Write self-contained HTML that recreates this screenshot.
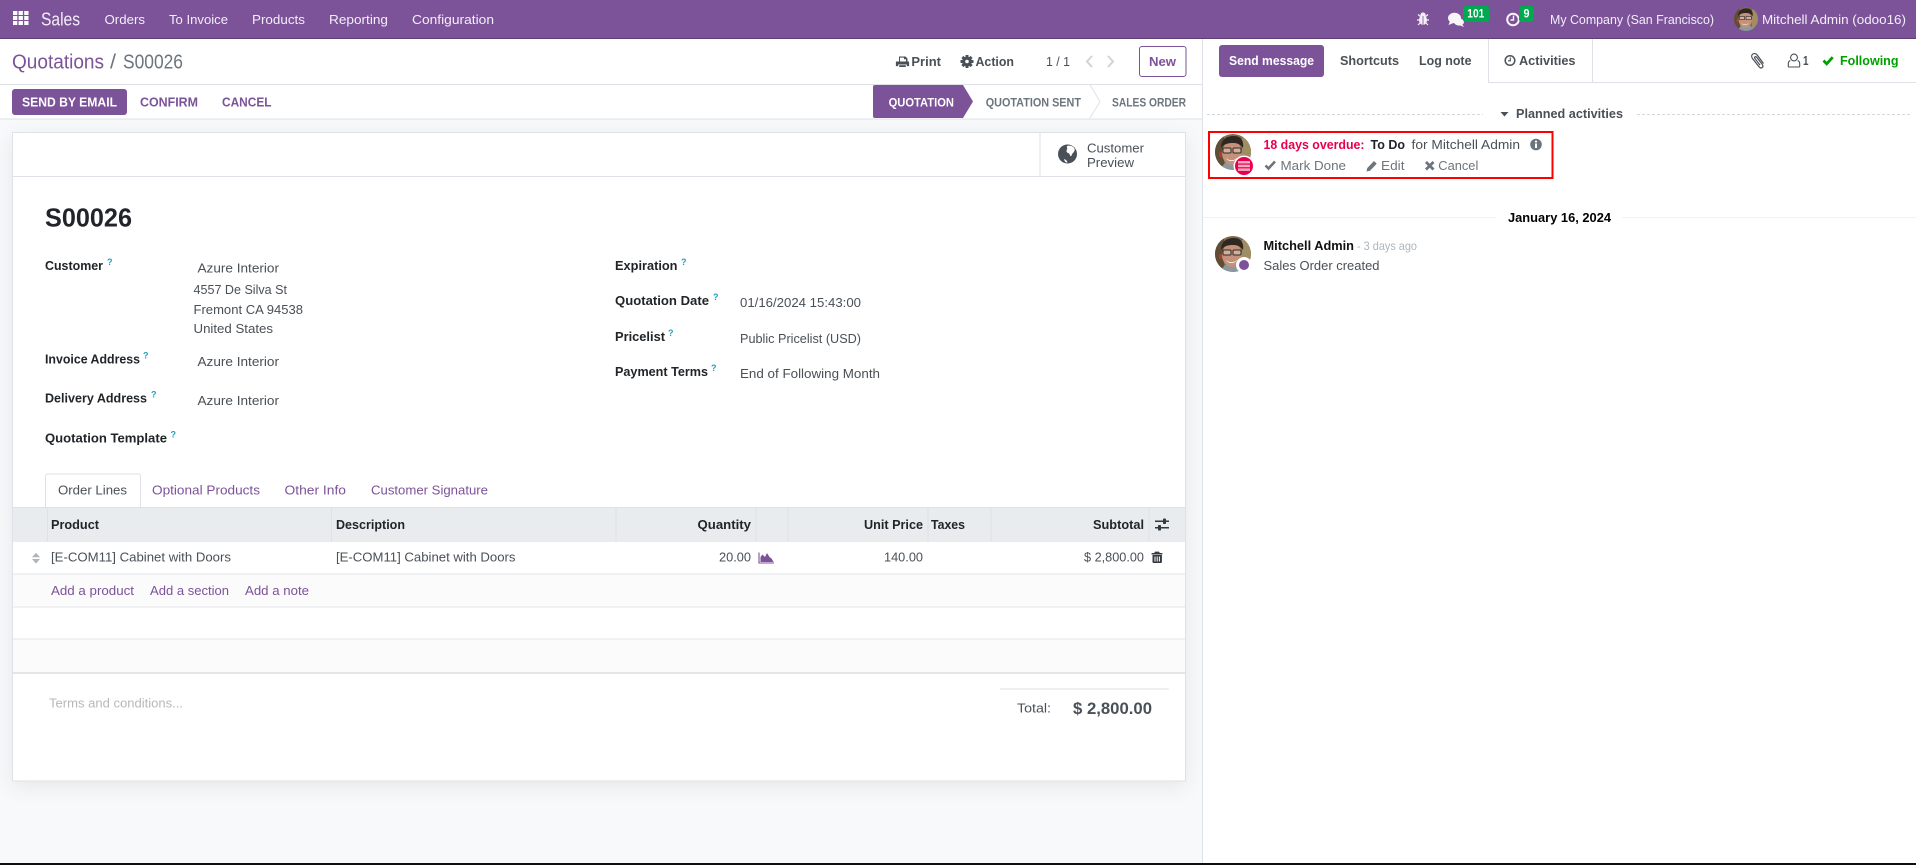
<!DOCTYPE html>
<html lang="en">
<head>
<meta charset="utf-8">
<title>S00026 - Quotations</title>
<style>
html,body{margin:0;padding:0;width:1916px;height:865px;overflow:hidden;background:#f8f9fa}
svg{display:block;position:absolute;left:0;top:0}
text{font-family:"Liberation Sans",Arial,sans-serif;font-size:13px;fill:#495057;white-space:pre}
.b{font-weight:700}
.k{fill:#212529}
.w{fill:#f3eef7}
.p{fill:#7c5299}
.g{fill:#6c757d}
.q{font-size:9px;font-weight:700;fill:#1f9fc0}
</style>
</head>
<body>
<svg width="1916" height="865" viewBox="0 0 1916 865" xmlns="http://www.w3.org/2000/svg">
<defs>
<clipPath id="cp"><circle cx="18" cy="18" r="18"/></clipPath>
<symbol id="av" viewBox="0 0 36 36">
<g clip-path="url(#cp)">
<rect width="36" height="36" fill="#7d6c4c"/>
<rect x="0" y="0" width="9" height="36" fill="#5f4e36"/>
<rect x="27" y="4" width="9" height="32" fill="#a08d64"/>
<path d="M6 36c1-6 6-9 12-9s11 3 12 9z" fill="#8b98a0"/>
<ellipse cx="17" cy="19" rx="10" ry="12" fill="#c4917a"/>
<path d="M6 14C6 5 12 2 19 2c7 0 10 5 9 12-3-4-6-5-10-5-5 0-9 1-12 5z" fill="#2f2721"/>
<rect x="8" y="14" width="8" height="5" rx="1" fill="#d8ad96" stroke="#2a2a2a" stroke-width="1"/>
<rect x="18" y="14" width="8" height="5" rx="1" fill="#d8ad96" stroke="#2a2a2a" stroke-width="1"/>
<path d="M11 24c3 3 8 3 11 0-2 4-9 4-11 0z" fill="#fff"/>
<rect x="4" y="18" width="3" height="5" fill="#b03b30"/>
</g>
</symbol>
</defs>

<!-- page backgrounds -->
<rect width="1916" height="865" fill="#f8f9fa"/>
<rect x="1202" y="39" width="714" height="826" fill="#fff"/>
<rect x="1202" y="39" width="1" height="826" fill="#dee2e6"/>

<!-- top navbar -->
<rect width="1916" height="38" fill="#7c5299"/>
<rect y="38" width="1916" height="1" fill="#5e3f75"/>
<g fill="#fff">
<rect x="13" y="11" width="4.3" height="4"/><rect x="18.6" y="11" width="4.3" height="4"/><rect x="24.2" y="11" width="4.3" height="4"/>
<rect x="13" y="16" width="4.3" height="4"/><rect x="18.6" y="16" width="4.3" height="4"/><rect x="24.2" y="16" width="4.3" height="4"/>
<rect x="13" y="21" width="4.3" height="4"/><rect x="18.6" y="21" width="4.3" height="4"/><rect x="24.2" y="21" width="4.3" height="4"/>
</g>
<text class="w" x="41" y="25.5" style="font-size:18px" textLength="39" lengthAdjust="spacingAndGlyphs">Sales</text>
<text class="w" x="104.5" y="24" textLength="40.5" lengthAdjust="spacingAndGlyphs">Orders</text>
<text class="w" x="169" y="24" textLength="59" lengthAdjust="spacingAndGlyphs">To Invoice</text>
<text class="w" x="252" y="24" textLength="53" lengthAdjust="spacingAndGlyphs">Products</text>
<text class="w" x="329" y="24" textLength="59" lengthAdjust="spacingAndGlyphs">Reporting</text>
<text class="w" x="412" y="24" textLength="82" lengthAdjust="spacingAndGlyphs">Configuration</text>

<!-- bug -->
<g fill="#f3eef7">
<ellipse cx="1423" cy="20" rx="4" ry="5"/><circle cx="1423" cy="15" r="2.6"/>
<path d="M1418 14.5l2.5 2M1428 14.5l-2.5 2M1417 20h3M1429 20h-3M1418 25l2.5-2.5M1428 25l-2.5-2.5" stroke="#f3eef7" stroke-width="1.2" fill="none"/>
</g>
<rect x="1422.6" y="16" width=".8" height="9" fill="#7c5299"/>
<!-- comments -->
<g fill="#f8f5fa">
<ellipse cx="1454.5" cy="18" rx="6.5" ry="5.2"/><path d="M1450 21l-1.5 4 5-2z"/>
<ellipse cx="1459" cy="22" rx="5" ry="3.6"/><path d="M1462 24l2 3-5-2z"/>
</g>
<rect x="1463" y="6" width="26.5" height="16" rx="2.5" fill="#00a84f"/>
<text x="1467.3" y="17.5" style="fill:#fff;font-size:12px;font-weight:700" textLength="17" lengthAdjust="spacingAndGlyphs">101</text>
<!-- clock -->
<circle cx="1513" cy="19.5" r="5.8" fill="none" stroke="#f8f5fa" stroke-width="2"/>
<path d="M1513.5 15.5v4.5h-3" fill="none" stroke="#f8f5fa" stroke-width="1.4"/>
<rect x="1519" y="6" width="15" height="16" rx="2.5" fill="#00a84f"/>
<text x="1523.5" y="17.5" style="fill:#fff;font-size:12px;font-weight:700" textLength="6" lengthAdjust="spacingAndGlyphs">9</text>
<text class="w" x="1550" y="24" textLength="164" lengthAdjust="spacingAndGlyphs">My Company (San Francisco)</text>
<use href="#av" x="1734" y="7" width="24" height="24"/>
<text class="w" x="1762" y="24" textLength="144" lengthAdjust="spacingAndGlyphs">Mitchell Admin (odoo16)</text>

<!-- control panel -->
<rect y="39" width="1202" height="80" fill="#fff"/>
<rect y="84" width="1202" height="1" fill="#dee2e6"/>
<rect y="118.5" width="1202" height="1" fill="#dee2e6"/>
<text class="p" x="12" y="68.5" style="font-size:20px" textLength="92" lengthAdjust="spacingAndGlyphs">Quotations</text>
<text class="g" x="110" y="68.5" style="font-size:20px" textLength="6" lengthAdjust="spacingAndGlyphs">/</text>
<text class="g" x="123" y="68.5" style="font-size:20px" textLength="60" lengthAdjust="spacingAndGlyphs">S00026</text>

<!-- print icon -->
<g fill="#495057">
<path d="M899 56.5h6.5l2 2v3.5h-1.500v-2.800h-2v-1.600h-4v4.400H899z"/>
<path d="M896.500 61.500h12a.6.6 0 0 1 .6.6v4h-2.300v-1.600h-8.600v1.600h-2.300v-4a.6.6 0 0 1 .6-.6z"/>
<rect x="899.200" y="65.200" width="6.600" height="1.800"/>
</g>
<text x="911.400" y="66" class="b" textLength="29.600" lengthAdjust="spacingAndGlyphs">Print</text>
<!-- gear icon -->
<g transform="translate(967,61.5)">
<circle r="4.900" fill="#495057"/>
<g fill="#495057"><rect x="-1.500" y="-6.500" width="3" height="13"/><rect x="-6.500" y="-1.500" width="13" height="3"/>
<rect x="-1.500" y="-6.500" width="3" height="13" transform="rotate(45)"/><rect x="-1.500" y="-6.500" width="3" height="13" transform="rotate(-45)"/></g>
<circle r="1.800" fill="#fff"/>
</g>
<text x="975.500" y="66" class="b" textLength="38.500" lengthAdjust="spacingAndGlyphs">Action</text>
<text x="1046" y="66" textLength="24" lengthAdjust="spacingAndGlyphs">1 / 1</text>
<path d="M1092 56l-5 5.500 5 5.500M1108 56l5 5.500-5 5.500" fill="none" stroke="#ced4da" stroke-width="2"/>
<rect x="1139.500" y="46.500" width="46.500" height="30" rx="2.500" fill="#fff" stroke="#7c5299"/>
<text class="p b" x="1149" y="66" textLength="27" lengthAdjust="spacingAndGlyphs">New</text>

<!-- action row -->
<rect x="12" y="89" width="115" height="26" rx="3" fill="#7c5299"/>
<text class="b" x="22" y="106.500" style="fill:#fff" textLength="95" lengthAdjust="spacingAndGlyphs">SEND BY EMAIL</text>
<text class="p b" x="140" y="106.500" textLength="58" lengthAdjust="spacingAndGlyphs">CONFIRM</text>
<text class="p b" x="222" y="106.500" textLength="49.500" lengthAdjust="spacingAndGlyphs">CANCEL</text>

<!-- status bar -->
<path d="M875 85h88l10 16.500-10 16.500h-88a2 2 0 0 1-2-2V87a2 2 0 0 1 2-2z" fill="#7c5299"/>
<text class="b" x="888.600" y="106.500" style="fill:#fff;font-size:12px" textLength="65.400" lengthAdjust="spacingAndGlyphs">QUOTATION</text>
<text class="b g" x="985.700" y="106.500" style="font-size:12px" textLength="95.300" lengthAdjust="spacingAndGlyphs">QUOTATION SENT</text>
<path d="M1090 85l10 16.500-10 16.500" fill="none" stroke="#dee2e6"/>
<text class="b g" x="1112" y="106.500" style="font-size:12px" textLength="74" lengthAdjust="spacingAndGlyphs">SALES ORDER</text>

<!-- form sheet -->
<rect x="12.500" y="132.500" width="1173" height="648.500" fill="#fff" stroke="#dee2e6" style="filter:drop-shadow(0 5px 10px rgba(0,0,0,.07))"/>
<rect x="13" y="176" width="1172" height="1" fill="#dee2e6"/>
<rect x="1039.500" y="133" width="1" height="43" fill="#dee2e6"/>
<!-- globe -->
<circle cx="1067.500" cy="154" r="9.500" fill="#495057"/>
<path d="M1067 146c3-1 6 0 7.500 2.500 .8 2-1 4-2 5-1 1-.5 2.500-2 2.800-.8-1.800-1-3-3-3.500-1.500-1-1-2.800-.3-3.800.5-1.200-.8-1.800-.2-3zM1064 159c1.500.5 3 1.500 3.500 3.300l-1.500.2c-1-1-1.800-2-2-3.500z" fill="#fff"/>
<text x="1087" y="152.500" textLength="57" lengthAdjust="spacingAndGlyphs">Customer</text>
<text x="1087" y="167" textLength="47" lengthAdjust="spacingAndGlyphs">Preview</text>

<text class="k b" x="45" y="226.500" style="font-size:26px" textLength="87" lengthAdjust="spacingAndGlyphs">S00026</text>

<text class="k b" x="45" y="270" textLength="58" lengthAdjust="spacingAndGlyphs">Customer</text><text class="q" x="107" y="265">?</text>
<text x="197.500" y="272.500" textLength="81.500" lengthAdjust="spacingAndGlyphs">Azure Interior</text>
<text x="193.500" y="294" textLength="93.500" lengthAdjust="spacingAndGlyphs">4557 De Silva St</text>
<text x="193.500" y="314" textLength="109.500" lengthAdjust="spacingAndGlyphs">Fremont CA 94538</text>
<text x="193.500" y="333" textLength="79.500" lengthAdjust="spacingAndGlyphs">United States</text>

<text class="k b" x="45" y="363.500" textLength="95" lengthAdjust="spacingAndGlyphs">Invoice Address</text><text class="q" x="143" y="358.500">?</text>
<text x="197.500" y="366" textLength="81.500" lengthAdjust="spacingAndGlyphs">Azure Interior</text>
<text class="k b" x="45" y="402.500" textLength="102" lengthAdjust="spacingAndGlyphs">Delivery Address</text><text class="q" x="151" y="397.500">?</text>
<text x="197.500" y="405" textLength="81.500" lengthAdjust="spacingAndGlyphs">Azure Interior</text>
<text class="k b" x="45" y="442.500" textLength="122" lengthAdjust="spacingAndGlyphs">Quotation Template</text><text class="q" x="170.500" y="437.500">?</text>

<text class="k b" x="615" y="270" textLength="62.500" lengthAdjust="spacingAndGlyphs">Expiration</text><text class="q" x="681" y="265">?</text>
<text class="k b" x="615" y="305" textLength="94" lengthAdjust="spacingAndGlyphs">Quotation Date</text><text class="q" x="713" y="300">?</text>
<text x="740" y="307" textLength="121" lengthAdjust="spacingAndGlyphs">01/16/2024 15:43:00</text>
<text class="k b" x="615" y="341" textLength="50" lengthAdjust="spacingAndGlyphs">Pricelist</text><text class="q" x="668" y="336">?</text>
<text x="740" y="343" textLength="121" lengthAdjust="spacingAndGlyphs">Public Pricelist (USD)</text>
<text class="k b" x="615" y="376" textLength="93" lengthAdjust="spacingAndGlyphs">Payment Terms</text><text class="q" x="711" y="371">?</text>
<text x="740" y="378" textLength="140" lengthAdjust="spacingAndGlyphs">End of Following Month</text>

<!-- tabs -->
<path d="M45.500 507.500V476a2 2 0 0 1 2-2h91a2 2 0 0 1 2 2v31.500" fill="#fff" stroke="#dee2e6"/>
<text x="58" y="494.500" textLength="69" lengthAdjust="spacingAndGlyphs">Order Lines</text>
<text class="p" x="152" y="494.500" textLength="108" lengthAdjust="spacingAndGlyphs">Optional Products</text>
<text class="p" x="284.500" y="494.500" textLength="61.500" lengthAdjust="spacingAndGlyphs">Other Info</text>
<text class="p" x="371" y="494.500" textLength="117" lengthAdjust="spacingAndGlyphs">Customer Signature</text>

<!-- table -->
<rect x="13" y="507" width="1172" height="35" fill="#e9ecef"/>
<rect x="13" y="507" width="1172" height="1" fill="#dee2e6"/>
<g fill="#dee2e6">
<rect x="47" y="508" width="1" height="34"/><rect x="331" y="508" width="1" height="34"/><rect x="615.500" y="508" width="1" height="34"/>
<rect x="755.500" y="508" width="1" height="34"/><rect x="787.500" y="508" width="1" height="34"/><rect x="927.500" y="508" width="1" height="34"/>
<rect x="990.500" y="508" width="1" height="34"/><rect x="1148.500" y="508" width="1" height="34"/>
</g>
<text class="k b" x="51" y="529" textLength="48" lengthAdjust="spacingAndGlyphs">Product</text>
<text class="k b" x="336" y="529" textLength="69" lengthAdjust="spacingAndGlyphs">Description</text>
<text class="k b" x="697.500" y="529" textLength="53.500" lengthAdjust="spacingAndGlyphs">Quantity</text>
<text class="k b" x="864" y="529" textLength="59" lengthAdjust="spacingAndGlyphs">Unit Price</text>
<text class="k b" x="931" y="529" textLength="34" lengthAdjust="spacingAndGlyphs">Taxes</text>
<text class="k b" x="1093" y="529" textLength="51" lengthAdjust="spacingAndGlyphs">Subtotal</text>
<!-- sliders -->
<g fill="#343a40">
<rect x="1155" y="520.500" width="14" height="1.500"/><rect x="1155" y="527" width="14" height="1.500"/>
<rect x="1163" y="518.500" width="3" height="5.500" rx=".8"/><rect x="1158" y="525" width="3" height="5.500" rx=".8"/>
</g>

<rect x="13" y="574" width="1172" height="33" fill="#fbfbfc"/>
<rect x="13" y="639" width="1172" height="33" fill="#fbfbfc"/>
<rect x="13" y="573.500" width="1172" height="1" fill="#e3e6e9"/>
<rect x="13" y="606.500" width="1172" height="1" fill="#e3e6e9"/>
<rect x="13" y="638.500" width="1172" height="1" fill="#e3e6e9"/>
<rect x="13" y="672" width="1172" height="2" fill="#e3e6e9"/>

<path d="M36 552.700l4 4.500h-8zM32 559h8l-4 4.600z" fill="#adb5bd"/>
<text x="51" y="561.500" textLength="180" lengthAdjust="spacingAndGlyphs">[E-COM11] Cabinet with Doors</text>
<text x="336" y="561.500" textLength="179.500" lengthAdjust="spacingAndGlyphs">[E-COM11] Cabinet with Doors</text>
<text x="719" y="561.500" textLength="32" lengthAdjust="spacingAndGlyphs">20.00</text>
<path d="M759 552.500v10.500h15" fill="none" stroke="#7c5299" stroke-width="1.100"/>
<path d="M760.500 562l0-5 2-2.500 2.500 2.500 2-4 2.500 4 2 1.500 2 3.500z" fill="#7c5299"/>
<text x="884" y="561.500" textLength="39" lengthAdjust="spacingAndGlyphs">140.00</text>
<text x="1084" y="561.500" textLength="60" lengthAdjust="spacingAndGlyphs">$ 2,800.00</text>
<g fill="#343a40" transform="translate(0,-.7)">
<path d="M1155 552.300h4l.8 1.400h2.600v1.500h-10.800v-1.500h2.600z"/>
<path d="M1152.500 555.700h9.400v7a1 1 0 0 1-1 1h-7.400a1 1 0 0 1-1-1zm2 1.500v5h1v-5zm2.200 0v5h1v-5zm2.200 0v5h1v-5z" fill-rule="evenodd"/>
</g>

<text class="p" x="51" y="595" textLength="83" lengthAdjust="spacingAndGlyphs">Add a product</text>
<text class="p" x="150" y="595" textLength="79" lengthAdjust="spacingAndGlyphs">Add a section</text>
<text class="p" x="245" y="595" textLength="64" lengthAdjust="spacingAndGlyphs">Add a note</text>

<text x="49" y="707.500" style="fill:#b5b8bb" textLength="134" lengthAdjust="spacingAndGlyphs">Terms and conditions...</text>
<rect x="1000" y="688.500" width="169" height="1" fill="#dee2e6"/>
<text x="1017" y="712.500" textLength="34" lengthAdjust="spacingAndGlyphs">Total:</text>
<text class="b" x="1073" y="714" style="font-size:17px" textLength="79" lengthAdjust="spacingAndGlyphs">$ 2,800.00</text>

<!-- chatter top -->
<rect x="1219" y="45" width="105" height="32" rx="3" fill="#7c5299"/>
<text class="b" x="1229" y="65" style="fill:#fff" textLength="85" lengthAdjust="spacingAndGlyphs">Send message</text>
<text class="b" x="1340" y="65" textLength="59" lengthAdjust="spacingAndGlyphs">Shortcuts</text>
<text class="b" x="1419" y="65" textLength="52.500" lengthAdjust="spacingAndGlyphs">Log note</text>
<rect x="1488" y="39" width="1" height="44" fill="#dee2e6"/>
<rect x="1592" y="39" width="1" height="44" fill="#dee2e6"/>
<rect x="1488" y="82" width="428" height="1" fill="#dee2e6"/>
<circle cx="1510" cy="60.500" r="4.800" fill="none" stroke="#495057" stroke-width="1.500"/>
<path d="M1510.300 57.500v3.300h-2.300" fill="none" stroke="#495057" stroke-width="1.100"/>
<text class="b" x="1519" y="65" textLength="56.500" lengthAdjust="spacingAndGlyphs">Activities</text>
<!-- paperclip -->
<path d="M1763.500 63.500l-6.300-8.500c-1.300-1.700-3.500-1.800-4.600-.8-1.200 1-1.200 2.900 0 4.500l6.400 8c1 1.200 2.300 1.500 3.200.8.900-.7.900-2 0-3.200l-5.500-7c-.5-.6-1.200-.8-1.700-.4-.5.400-.5 1.100 0 1.800l5 6.400" fill="none" stroke="#495057" stroke-width="1.200"/>
<!-- person -->
<circle cx="1794" cy="57.500" r="3.400" fill="none" stroke="#495057" stroke-width="1.100"/>
<path d="M1790.300 60.500c-1.500.7-2 1.800-2 3.300v2.300a.9.9 0 0 0 .9.9h9.600a.9.9 0 0 0 .9-.9v-2.300c0-1.500-.5-2.600-2-3.300" fill="none" stroke="#495057" stroke-width="1.100"/>
<text class="b" x="1803" y="65" textLength="5.500" lengthAdjust="spacingAndGlyphs">1</text>
<path d="M1823.500 60.500l3.200 3.300 6-6.600" fill="none" stroke="#00a000" stroke-width="2.800"/>
<text class="b" x="1840" y="65" style="fill:#00a000" textLength="58.500" lengthAdjust="spacingAndGlyphs">Following</text>

<!-- planned activities -->
<path d="M1207 114.500h276M1637 114.500h275" stroke="#d5d9dd" stroke-dasharray="3 2" fill="none"/>
<path d="M1500.500 112h8l-4 4.500z" fill="#495057"/>
<text class="b" x="1516" y="118" style="fill:#495057" textLength="107" lengthAdjust="spacingAndGlyphs">Planned activities</text>

<rect x="1209" y="132" width="343.500" height="46" fill="none" stroke="#f00" stroke-width="2"/>
<use href="#av" x="1215" y="134" width="36" height="36"/>
<circle cx="1244" cy="166" r="10.500" fill="#fff"/>
<circle cx="1244" cy="166" r="9" fill="#e8004c"/>
<rect x="1238" y="161" width="12" height="2.500" fill="#f8a8c0"/><rect x="1238" y="164.700" width="12" height="2.500" fill="#f8a8c0"/><rect x="1238" y="168.400" width="12" height="2.500" fill="#f8a8c0"/>

<text class="b" x="1263.500" y="149" style="fill:#e8004c" textLength="101" lengthAdjust="spacingAndGlyphs">18 days overdue:</text>
<text class="b k" x="1370.500" y="149" textLength="34.500" lengthAdjust="spacingAndGlyphs">To Do</text>
<text x="1411.500" y="149" textLength="108.500" lengthAdjust="spacingAndGlyphs">for Mitchell Admin</text>
<circle cx="1536" cy="144.500" r="5.800" fill="#6c757d"/>
<rect x="1535" y="143.500" width="2" height="4.500" fill="#fff"/><rect x="1535" y="140.700" width="2" height="1.800" fill="#fff"/>

<path d="M1265.500 165.500l3 3 6.500-7" fill="none" stroke="#6c757d" stroke-width="2.600"/>
<text class="g" x="1280.500" y="170" textLength="65.500" lengthAdjust="spacingAndGlyphs">Mark Done</text>
<path d="M1366.500 171.500l.8-3.500 6.700-7 2.700 2.700-6.700 7z" fill="#6c757d"/>
<text class="g" x="1381" y="170" textLength="23.500" lengthAdjust="spacingAndGlyphs">Edit</text>
<path d="M1426 162l7.500 7.500M1433.500 162l-7.500 7.500" stroke="#6c757d" stroke-width="2.800" fill="none"/>
<text class="g" x="1438.300" y="170" textLength="40" lengthAdjust="spacingAndGlyphs">Cancel</text>

<!-- date separator -->
<rect x="1203" y="217" width="293" height="1" fill="#f1f2f4"/>
<rect x="1622" y="217" width="294" height="1" fill="#f1f2f4"/>
<text class="b" x="1508" y="222" style="fill:#000" textLength="103" lengthAdjust="spacingAndGlyphs">January 16, 2024</text>

<!-- message -->
<use href="#av" x="1215" y="236" width="36" height="36"/>
<circle cx="1244" cy="265" r="8" fill="#fff"/>
<circle cx="1244" cy="265" r="5" fill="#7c5299"/>
<text class="b" x="1263.500" y="250" style="fill:#111" textLength="90.500" lengthAdjust="spacingAndGlyphs">Mitchell Admin</text>
<text x="1357" y="250" style="fill:#adb5bd;font-size:12px" textLength="60" lengthAdjust="spacingAndGlyphs">- 3 days ago</text>
<text x="1263.500" y="270" textLength="116" lengthAdjust="spacingAndGlyphs">Sales Order created</text>

<!-- screenshot bottom edge -->
<rect y="863" width="1916" height="2" fill="#0e0e12"/>
</svg>
</body>
</html>
